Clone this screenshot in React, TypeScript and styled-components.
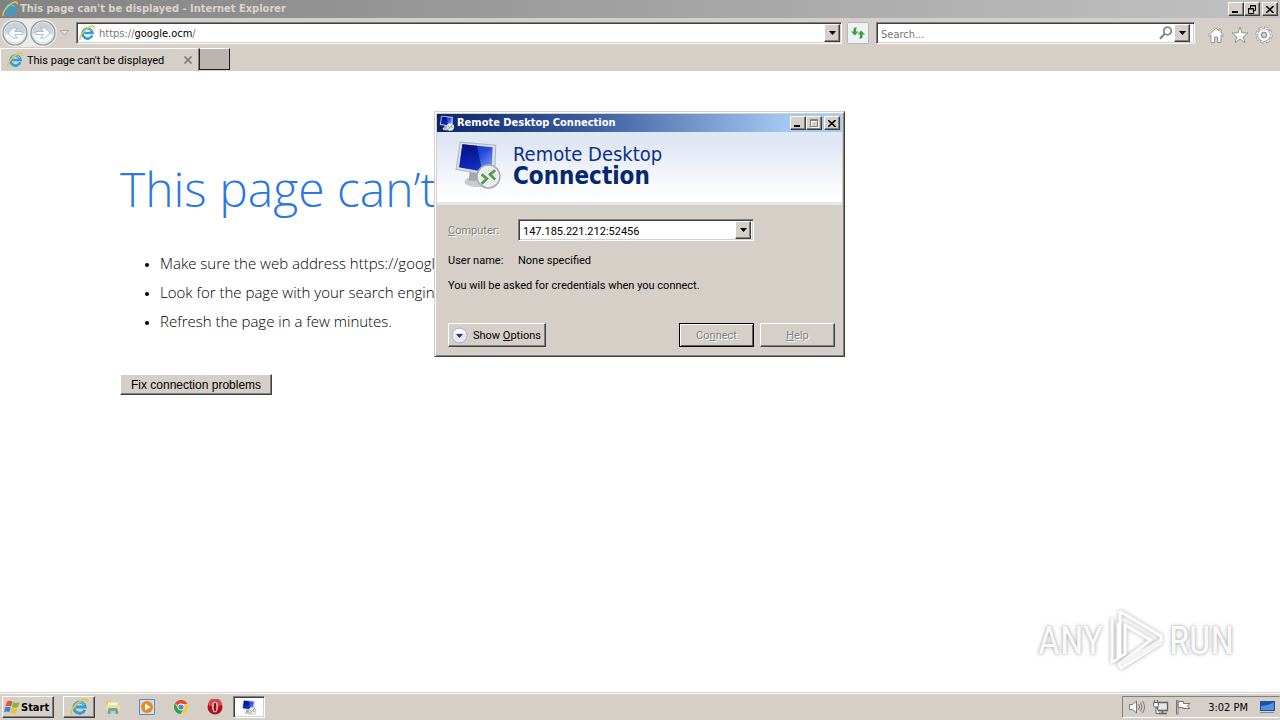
import React from "react";
import styled, { createGlobalStyle, css } from "styled-components";

const uiFont = '"DejaVu Sans Condensed", "DejaVu Sans", sans-serif';
const sansFont = '"Liberation Sans", Arial, sans-serif';
const compactFont = 'Roboto, "Liberation Sans", sans-serif';
const pageFont = '"Open Sans", "Noto Sans", sans-serif';
const face = "#d5cfc8";

const GlobalStyle = createGlobalStyle`
  * { box-sizing: border-box; }
  body { margin: 0; background: #fff; font-family: ${uiFont}; font-size: 11px; color: #000; }
  button, input { font: inherit; color: inherit; padding: 0; margin: 0; border-radius: 0; outline: none; }
  h1, h2, p, ul { margin: 0; padding: 0; }
  svg { display: block; flex: none; }
`;

const raised = css`
  background: ${face};
  border: 1px solid;
  border-color: #fff #404040 #404040 #fff;
  box-shadow: inset -1px -1px #808080;
`;

const sunken = css`
  border: 1px solid;
  border-color: #808080 #fff #fff #808080;
  box-shadow: inset 1px 1px #404040, inset -1px -1px #d5d0c8;
`;

const Desktop = styled.div`
  position: relative;
  display: flex;
  flex-direction: column;
  min-height: 100vh;
`;

const TitleBar = styled.header<{ $active?: boolean }>`
  display: flex;
  align-items: center;
  gap: 2px;
  height: 18px;
  padding: 0 2px;
  color: ${(p) => (p.$active ? "#fff" : "#d8d4cc")};
  background: ${(p) =>
    p.$active
      ? "linear-gradient(90deg, #0b256b, #3f62a3 40%, #a3c8f0 86%, #a6caf0)"
      : "linear-gradient(90deg, #828282, #c2c2c2)"};
`;

const TitleText = styled.h2`
  flex: 1;
  font-size: 11px;
  line-height: 18px;
  font-weight: bold;
  white-space: nowrap;
`;

const CaptionButtons = styled.div`
  display: flex;
`;

const CaptionButton = styled.button<{ $apart?: boolean }>`
  ${raised}
  display: grid;
  place-items: center;
  width: 16px;
  height: 14px;
  margin-left: ${(p) => (p.$apart ? "2px" : "0")};
`;

const Toolbar = styled.div`
  display: flex;
  align-items: center;
  height: 30px;
  padding: 0 7px 0 1px;
  background: ${face};
`;

const NavPair = styled.div`
  display: flex;
  height: 28px;
  border-radius: 14px;
  background: #eceae6;
`;

const NavButton = styled.button`
  display: grid;
  place-items: center;
  width: 28px;
  height: 28px;
  border: 0;
  background: none;
`;

const PlainButton = styled.button<{ $width: number }>`
  display: grid;
  place-items: center;
  width: ${(p) => p.$width}px;
  height: 24px;
  border: 0;
  background: none;
`;

const ToolButton = styled(PlainButton)`
  padding-top: 4px;
`;

const Field = styled.div<{ $width?: number }>`
  ${sunken}
  display: flex;
  align-items: center;
  flex: ${(p) => (p.$width ? `0 0 ${p.$width}px` : "1")};
  height: 22px;
  padding: 2px;
  background: #fff;
`;

const AddressField = styled(Field)`
  margin-left: 4px;
  padding-right: 1px;
`;

const SearchField = styled(Field)`
  margin-right: 12px;
  padding-right: 4px;
`;

const Url = styled.div`
  flex: 1;
  margin-left: 4px;
  padding-top: 2px;
  line-height: 16px;
  color: #777;
  white-space: nowrap;

  b { font-weight: normal; color: #000; }
`;

const TextInput = styled.input`
  flex: 1;
  min-width: 0;
  height: 18px;
  padding: 2px 0 0 2px;
  border: 0;
  background: none;
  &::placeholder { color: #777; opacity: 1; }
`;

const DropButton = styled.button`
  ${raised}
  display: grid;
  place-items: center;
  width: 16px;
  height: 18px;
`;

const RefreshButton = styled.button`
  display: grid;
  place-items: center;
  width: 22px;
  height: 22px;
  margin: 0 7px 0 5px;
  border: 1px solid #b9b9b4;
  border-radius: 2px;
  background: #edf3f5;
`;

const Tabs = styled.div`
  display: flex;
  height: 23px;
  background: ${face};
`;

const Tab = styled.div`
  display: flex;
  align-items: center;
  width: 199px;
  padding: 0 3px 0 6px;
  gap: 4px;
  border-top: 1px solid #fff;
  border-left: 1px solid #fff;
  border-right: 1px solid #808080;
`;

const TabLabel = styled.span`
  flex: 1;
  font-family: ${compactFont};
  white-space: nowrap;
`;

const CloseTab = styled.button`
  display: grid;
  place-items: center;
  width: 14px;
  height: 14px;
  border: 0;
  background: none;
`;

const NewTab = styled.button`
  width: 31px;
  height: 22px;
  border: 1px solid;
  border-color: #fff #202020 #202020 #202020;
  background: #bdb5b0;
`;

const Page = styled.main`
  flex: 1;
  padding: 86px 120px 40px;
  background: #fff;
  font-family: ${pageFont};
`;

const Heading = styled.h1`
  font-size: 48px;
  line-height: 64px;
  font-weight: 300;
  color: #2b78e4;
  white-space: nowrap;
`;

const Tips = styled.ul`
  margin-top: 28px;
  padding-left: 40px;
  font-size: 15px;
  line-height: 29px;
  font-weight: 300;
  color: #000;
  white-space: nowrap;

  li::marker { font-size: 11px; }
`;

const FixButton = styled.button`
  ${raised}
  height: 21px;
  padding: 0 10px;
  margin-top: 38px;
  font-family: ${sansFont};
  font-size: 12px;
  line-height: 18px;
`;

const Dialog = styled.section`
  position: absolute;
  left: 434px;
  top: 111px;
  width: 411px;
  padding: 2px;
  border: 1px solid;
  border-color: #d5d0c8 #404040 #404040 #d5d0c8;
  box-shadow: inset 1px 1px #fff, inset -1px -1px #808080;
  background: ${face};
  font-family: ${compactFont};
`;

const DialogTitle = styled(TitleText)`
  font-family: ${uiFont};
`;

const Banner = styled.div`
  display: flex;
  align-items: flex-start;
  gap: 10px;
  height: 73px;
  padding: 7px 16px 0;
  border-bottom: 3px double #e8e8e8;
  background: linear-gradient(#dfe6f4, #dfe6f4 12%, #fafbfd 80%, #fff);
`;

const BannerText = styled.p`
  padding-top: 4px;
  font-family: ${uiFont};
  font-size: 20px;
  line-height: 22px;
  color: #0b3188;

  strong { display: block; font-size: 24px; color: #06286e; }
`;

const DialogBody = styled.div`
  padding: 14px 7px 7px 11px;
`;

const Row = styled.div`
  display: flex;
  align-items: center;
  height: 22px;
`;

const InfoRow = styled(Row)`
  height: 26px;
  margin-top: 6px;
`;

const Label = styled.label<{ $disabled?: boolean }>`
  width: 70px;
  ${(p) => p.$disabled && "color: #808080; text-shadow: 1px 1px #fff;"}
`;

const Note = styled.p`
  line-height: 26px;
`;

const Actions = styled.div`
  display: flex;
  align-items: center;
  gap: 6px;
  margin-top: 24px;
`;

const DialogButton = styled.button<{ $primary?: boolean }>`
  ${raised}
  width: 75px;
  height: 24px;
  ${(p) => p.$primary && "border-color: #000; box-shadow: inset 1px 1px #fff, inset -1px -1px #606060;"}
  &:disabled { color: #808080; text-shadow: 1px 1px #fff; }
`;

const OptionsButton = styled(DialogButton)`
  display: flex;
  align-items: center;
  gap: 5px;
  width: 98px;
  padding-left: 2px;
  margin-right: auto;
`;

const Watermark = styled.div`
  position: absolute;
  right: 46px;
  bottom: 46px;
  display: flex;
  align-items: center;
  gap: 4px;
  font-family: "Liberation Sans Narrow", "Roboto Condensed", ${sansFont};
  font-size: 38px;
  line-height: 66px;
  color: #fafafa;
  text-shadow: 0 0 4px #aaa, 0 0 2px #ccc;
`;

const Taskbar = styled.footer`
  display: flex;
  align-items: center;
  height: 28px;
  padding: 1px 0 0 2px;
  border-top: 1px solid #d8d4cc;
  box-shadow: inset 0 1px #fff;
  background: ${face};
`;

const StartButton = styled.button`
  ${raised}
  display: flex;
  align-items: center;
  width: 52px;
  height: 22px;
  padding-left: 1px;
  margin-right: 9px;
  font-size: 11px;
  font-weight: bold;
`;

const TaskButton = styled.button<{ $state?: "raised" | "pressed" }>`
  display: grid;
  place-items: center;
  width: 32px;
  height: 22px;
  margin-right: 2px;
  border: 1px solid transparent;
  background: none;
  ${(p) => p.$state === "raised" && raised}
  ${(p) => p.$state === "pressed" && css`${sunken} background: #fff;`}
`;

const Tray = styled.div`
  display: flex;
  align-items: center;
  gap: 6px;
  height: 22px;
  margin-left: auto;
  padding: 0 4px 0 5px;
  border: 1px solid;
  border-color: #808080 transparent #fff #808080;
`;

const Clock = styled.time`
  margin: 0 5px 0 11px;
`;

const IELogo = ({ size = 16 }: { size?: number }) => (
  <svg width={size} height={size} viewBox="0 0 16 16" fill="none">
    <path d="M13.2 10.4A5 5 0 1 1 13.5 8H5.2" stroke="#2f9fd8" strokeWidth="2.6" />
    <path d="M4.2 6.4A5 5 0 0 1 12.8 6" stroke="#7fd0f2" strokeWidth="1" />
    <path d="M1.4 15C-.6 12.6 4.400 5.200 10 2.200c3.200-1.800 5.800-1.600 5 1.400" stroke="#e9c53c" strokeWidth="1.5" />
  </svg>
);

const RdpIcon = ({ size = 16 }: { size?: number }) => (
  <svg width={size} height={size} viewBox="0 0 48 48">
    <defs>
      <linearGradient id="screen" x1="0" y1="0" x2="1" y2="1">
        <stop offset="0" stopColor="#1428b8" />
        <stop offset=".5" stopColor="#2648dc" />
        <stop offset="1" stopColor="#8fb0f8" />
      </linearGradient>
      <linearGradient id="screenDark" x1="0" y1="0" x2="0" y2="1">
        <stop offset="0" stopColor="#020a70" />
        <stop offset="1" stopColor="#0a24c0" />
      </linearGradient>
    </defs>
    <ellipse cx="23" cy="41" rx="12" ry="5" fill="#c9ccce" />
    <path d="M16 31l12 3v6H15z" fill="#a3a8ac" />
    <path d="M7 3l34 3-1 30L3 29z" fill="#dde0e3" stroke="#b2b7bb" />
    <path d="M9 5l29 3-1 25L6 27z" fill="url(#screen)" />
    <path d="M9 5l14 1.500 5 24.500L6 27z" fill="url(#screenDark)" opacity=".8" />
    <circle cx="34" cy="36" r="11" fill="#eceeed" stroke="#a7abac" strokeWidth="1.500" />
    <path d="M27.500 34l5 4-5 5M40.500 30l-5 4 5 5" fill="none" stroke="#4c9c48" strokeWidth="2.600" />
  </svg>
);

const DownArrow = () => (
  <svg width="7" height="4" viewBox="0 0 7 4"><path d="M0 0h7L3.5 4z" fill="#000" /></svg>
);

const CloseGlyph = () => (
  <svg width="8" height="7" viewBox="0 0 8 7"><path d="M0 0l7.5 7M7.5 0L0 7" stroke="#000" strokeWidth="1.6" /></svg>
);

const MinimizeGlyph = () => (
  <svg width="8" height="8" viewBox="0 0 8 8"><path d="M0 6h6v2H0z" fill="#000" /></svg>
);

const RestoreGlyph = () => (
  <svg width="8" height="9" viewBox="0 0 8 9" fill="none" stroke="#000">
    <path d="M2.5 3V.5h5v5H6M2 1h6M.5 3.5h5v5h-5zM0 4h6" />
  </svg>
);

const MaximizeGlyph = () => (
  <svg width="9" height="9" viewBox="0 0 9 9" fill="none">
    <path d="M1.5 2.5h7v6h-7z" stroke="#fff" />
    <path d="M.5.5h7v7h-7zM0 1.5h8" stroke="#808080" />
  </svg>
);

const NavArrow = ({ forward }: { forward?: boolean }) => (
  <svg width="26" height="26" viewBox="0 0 26 26">
    <circle cx="13" cy="13" r="12" fill="#dce5eb" stroke="#8c979f" strokeWidth="1.2" />
    <path d="M2.5 13a10.5 10.5 0 0 1 21 0z" fill="#c7d2da" />
    <path d="M3 15a10.5 10.5 0 0 0 20 0z" fill="#f2f8fb" />
    <path
      d={forward ? "M6 11.5h7.5L10.500 8h4.200L20 13l-5.300 5h-4.200l3-3.500H6z" : "M20 11.500h-7.500L15.500 8h-4.200L6 13l5.300 5h4.200l-3-3.500H20z"}
      fill="#fff"
      stroke="#a4b1bb"
      strokeWidth=".8"
    />
  </svg>
);

const RefreshIcon = () => (
  <svg width="16" height="16" viewBox="0 0 16 16" fill="#3f9f3a">
    <path d="M7 2.500H5Q3.500 2.500 3.500 4.500V6.500H1l3.800 4 3.700-4H6V4.500z" />
    <path d="M9 13.500h2q1.500 0 1.500-2V9.500H15l-3.800-4-3.700 4H10v2z" />
  </svg>
);

const SearchIcon = () => (
  <svg width="14" height="14" viewBox="0 0 14 14" fill="none" stroke="#858585" strokeWidth="1.800">
    <circle cx="8.500" cy="5" r="3.800" /><path d="M5.800 7.800L1 12.800" strokeWidth="2.200" />
  </svg>
);

const HomeIcon = () => (
  <svg width="18" height="18" viewBox="0 0 18 18" fill="#fff" stroke="#96928e">
    <path d="M9 2L1.500 9l1 1.200L4 9v7.500h3.500V11h3v5.500H14V9l1.500 1.200 1-1.200L14 6.700V3h-2v1.800z" />
  </svg>
);

const StarIcon = () => (
  <svg width="18" height="18" viewBox="0 0 18 18" fill="#fff" stroke="#96928e">
    <path d="M9 1l2 5.800 6 .2-4.800 3.600 1.800 6L9 13.200l-5 3.400 1.800-6L1 7l6-.2z" />
  </svg>
);

const GearIcon = () => (
  <svg width="18" height="18" viewBox="0 0 18 18">
    <g fill="none">
      <circle cx="9" cy="9" r="6.800" stroke="#96928e" strokeWidth="3.600" strokeDasharray="3.300 2.040" />
      <circle cx="9" cy="9" r="6.500" stroke="#fff" strokeWidth="2.600" strokeDasharray="2.500 2.605" />
    </g>
    <circle cx="9" cy="9" r="4.600" fill="none" stroke="#96928e" strokeWidth="4" />
    <circle cx="9" cy="9" r="4.600" fill="none" stroke="#fff" strokeWidth="2.600" />
    <circle cx="9" cy="9" r="2.600" fill="#d5cfc8" stroke="#96928e" />
  </svg>
);

const WindowsFlag = () => (
  <svg width="17" height="16" viewBox="0 0 17 16">
    <path d="M3 2.500Q6 1 8.500 2.800L7 7.500Q4.500 6 1.500 7.300z" fill="#e9552b" />
    <path d="M9.300 3.200Q12 4.700 15.500 3L14 8q-3 1.500-6.200-.2z" fill="#7cb83c" />
    <path d="M1.300 8.300Q4.200 7 6.700 8.500L5.300 13.200Q3 11.800 0 13z" fill="#3c83d4" />
    <path d="M7.500 8.900q3 1.500 6.200.1l-1.500 4.800q-3 1.400-6.200-.2z" fill="#f5bd2a" />
  </svg>
);

const FolderIcon = () => (
  <svg width="16" height="16" viewBox="0 0 16 16">
    <path d="M1 2h5l1 1.500h7V14H1z" fill="#e5c767" />
    <path d="M3 3.500h10V8H3z" fill="#fff7d0" />
    <path d="M1 6h14v6H1z" fill="#f5df8f" />
    <path d="M3 15v-4q0-2 2-2h6q2 0 2 2v4h-2.500v-3h-5v3z" fill="#59a9d8" />
  </svg>
);

const PlayerIcon = () => (
  <svg width="16" height="16" viewBox="0 0 16 16">
    <path d="M.5.500h15v15H.5z" fill="#cbdff0" stroke="#568dbd" />
    <circle cx="8" cy="8" r="6" fill="#ee8a1d" /><path d="M6 4.500v7L11.500 8z" fill="#fff" />
  </svg>
);

const ChromeIcon = () => (
  <svg width="16" height="16" viewBox="0 0 16 16">
    <circle cx="8" cy="8" r="7" fill="#fbcb35" />
    <path d="M8 8L1.900 4.500A7 7 0 0 1 14.300 5H8z" fill="#dd493b" />
    <path d="M8 8l3 1.500L7.500 15A7 7 0 0 1 1.900 4.500L5 9.500z" fill="#29a259" />
    <circle cx="8" cy="8" r="3.400" fill="#fff" /><circle cx="8" cy="8" r="2.600" fill="#4289e8" />
  </svg>
);

const OperaIcon = () => (
  <svg width="16" height="16" viewBox="0 0 16 16">
    <circle cx="8" cy="8" r="7.500" fill="#b5121b" />
    <path d="M1 6a7 7 0 0 1 14 0q-7 3-14 0z" fill="#d74950" />
    <ellipse cx="8" cy="8" rx="2.700" ry="5.300" fill="#fff" /><ellipse cx="8" cy="8" rx="1.500" ry="4.500" fill="#81101a" />
  </svg>
);

const SpeakerIcon = () => (
  <svg width="18" height="16" viewBox="0 0 18 16" fill="none" stroke="#77736f">
    <path d="M1.500 5.500h3L8.500 2v12l-4-3.500h-3z" fill="#fff" />
    <path d="M10.500 5q2 3 0 6M12.500 3.500q3 4.500 0 9M14.500 2q4 6 0 12" />
  </svg>
);

const NetworkIcon = () => (
  <svg width="17" height="16" viewBox="0 0 17 16" fill="none" stroke="#66625f">
    <path d="M5.500 3.500h10v8h-10zM7 14.500h8M10.500 12v2" fill="#e9e7e4" strokeWidth="1.400" />
    <path d="M1.500 3.500h5v3l-1 1.500h-3l-1-1.500zM2.500 1v2M5.500 1v2M4 8v6.500h3" fill="#fff" />
  </svg>
);

const FlagIcon = () => (
  <svg width="16" height="16" viewBox="0 0 16 16" fill="#fff" stroke="#77736f">
    <path d="M1.500 1.500h1.500V15H1.500zM3 2.500h5.500v2H15L12.500 7l2 2.500H8v-1H3z" />
  </svg>
);

const DesktopIcon = () => (
  <svg width="16" height="14" viewBox="0 0 16 14">
    <path d="M1 1h15v10H1z" fill="#1a50a8" /><path d="M2 6q7 0 13-4v8H2z" fill="#4f92df" />
    <path d="M1 12h14v1H1z" fill="#808890" />
  </svg>
);

const OptionsIcon = () => (
  <svg width="17" height="17" viewBox="0 0 17 17">
    <circle cx="8.500" cy="8.500" r="7.500" fill="#e4e9f3" stroke="#a9b1c6" />
    <path d="M2.500 6a6.500 6.500 0 0 1 12 0z" fill="#fff" />
    <path d="M5 7h7l-3.500 4z" fill="#26366f" />
  </svg>
);

const PlayLogo = () => (
  <svg width="58" height="66" viewBox="0 0 58 66" fill="none" strokeLinejoin="round">
    <g style={{ filter: "drop-shadow(0 0 2px #aaa)" }}>
      <path d="M5 10v44l6-3V15" stroke="#fafafa" strokeWidth="3" />
      <path d="M14 4l40 24v7L14 60l-2-4 32-24-26-15v29l-5 3V4z" stroke="#fff" strokeWidth="3" />
      <path d="M14 56l40-23" stroke="#f3f3f3" strokeWidth="5" />
    </g>
  </svg>
);

export default function App() {
  return (
    <Desktop>
      <GlobalStyle />
      <TitleBar>
        <IELogo />
        <TitleText>This page can't be displayed - Internet Explorer</TitleText>
        <CaptionButtons>
          <CaptionButton aria-label="Minimize"><MinimizeGlyph /></CaptionButton>
          <CaptionButton aria-label="Restore"><RestoreGlyph /></CaptionButton>
          <CaptionButton $apart aria-label="Close"><CloseGlyph /></CaptionButton>
        </CaptionButtons>
      </TitleBar>
      <Toolbar>
        <NavPair>
          <NavButton aria-label="Back"><NavArrow /></NavButton>
          <NavButton aria-label="Forward"><NavArrow forward /></NavButton>
        </NavPair>
        <PlainButton $width={15} aria-label="Recent pages">
          <svg width="9" height="6" viewBox="0 0 9 6"><path d="M.5.500h8l-4 4.500z" fill="#e8e6e3" stroke="#aaa6a2" /></svg>
        </PlainButton>
        <AddressField>
          <IELogo />
          <Url>https://<b>google.ocm</b>/</Url>
          <DropButton aria-label="Show addresses"><DownArrow /></DropButton>
        </AddressField>
        <RefreshButton aria-label="Refresh"><RefreshIcon /></RefreshButton>
        <SearchField $width={319}>
          <TextInput aria-label="Search" placeholder="Search..." />
          <PlainButton $width={17} aria-label="Go"><SearchIcon /></PlainButton>
          <DropButton aria-label="Search providers"><DownArrow /></DropButton>
        </SearchField>
        <ToolButton $width={18} aria-label="Home"><HomeIcon /></ToolButton>
        <ToolButton $width={30} aria-label="Favorites"><StarIcon /></ToolButton>
        <ToolButton $width={18} aria-label="Tools"><GearIcon /></ToolButton>
      </Toolbar>
      <Tabs>
        <Tab>
          <IELogo />
          <TabLabel>This page can't be displayed</TabLabel>
          <CloseTab aria-label="Close tab">
            <svg width="8" height="8" viewBox="0 0 8 8"><path d="M.5.500l7 7M7.500.500l-7 7" stroke="#858079" strokeWidth="1.800" /></svg>
          </CloseTab>
        </Tab>
        <NewTab aria-label="New tab" />
      </Tabs>
      <Page>
        <Heading>This page can’t be displayed</Heading>
        <Tips>
          <li>Make sure the web address https://google.ocm is correct.</li>
          <li>Look for the page with your search engine.</li>
          <li>Refresh the page in a few minutes.</li>
        </Tips>
        <FixButton>Fix connection problems</FixButton>
      </Page>
      <Taskbar>
        <StartButton><WindowsFlag />Start</StartButton>
        <TaskButton $state="raised" aria-label="Internet Explorer"><IELogo size={18} /></TaskButton>
        <TaskButton aria-label="Explorer"><FolderIcon /></TaskButton>
        <TaskButton aria-label="Media Player"><PlayerIcon /></TaskButton>
        <TaskButton aria-label="Chrome"><ChromeIcon /></TaskButton>
        <TaskButton aria-label="Opera"><OperaIcon /></TaskButton>
        <TaskButton $state="pressed" aria-label="Remote Desktop Connection"><RdpIcon /></TaskButton>
        <Tray>
          <SpeakerIcon /><NetworkIcon /><FlagIcon />
          <Clock>3:02 PM</Clock>
          <DesktopIcon />
        </Tray>
      </Taskbar>
      <Watermark><span>ANY</span><PlayLogo /><span>RUN</span></Watermark>
      <Dialog role="dialog" aria-label="Remote Desktop Connection">
        <TitleBar $active>
          <RdpIcon />
          <DialogTitle>Remote Desktop Connection</DialogTitle>
          <CaptionButtons>
            <CaptionButton aria-label="Minimize"><MinimizeGlyph /></CaptionButton>
            <CaptionButton aria-label="Maximize" disabled><MaximizeGlyph /></CaptionButton>
            <CaptionButton $apart aria-label="Close"><CloseGlyph /></CaptionButton>
          </CaptionButtons>
        </TitleBar>
        <Banner>
          <RdpIcon size={50} />
          <BannerText>Remote Desktop<strong>Connection</strong></BannerText>
        </Banner>
        <DialogBody>
          <Row>
            <Label htmlFor="computer" $disabled><u>C</u>omputer:</Label>
            <Field $width={236}>
              <TextInput id="computer" defaultValue="147.185.221.212:52456" />
              <DropButton aria-label="Show computers"><DownArrow /></DropButton>
            </Field>
          </Row>
          <InfoRow><Label as="span">User name:</Label><span>None specified</span></InfoRow>
          <Note>You will be asked for credentials when you connect.</Note>
          <Actions>
            <OptionsButton><OptionsIcon /><span>Show <u>O</u>ptions</span></OptionsButton>
            <DialogButton $primary disabled>Co<u>n</u>nect</DialogButton>
            <DialogButton disabled><u>H</u>elp</DialogButton>
          </Actions>
        </DialogBody>
      </Dialog>
    </Desktop>
  );
}
